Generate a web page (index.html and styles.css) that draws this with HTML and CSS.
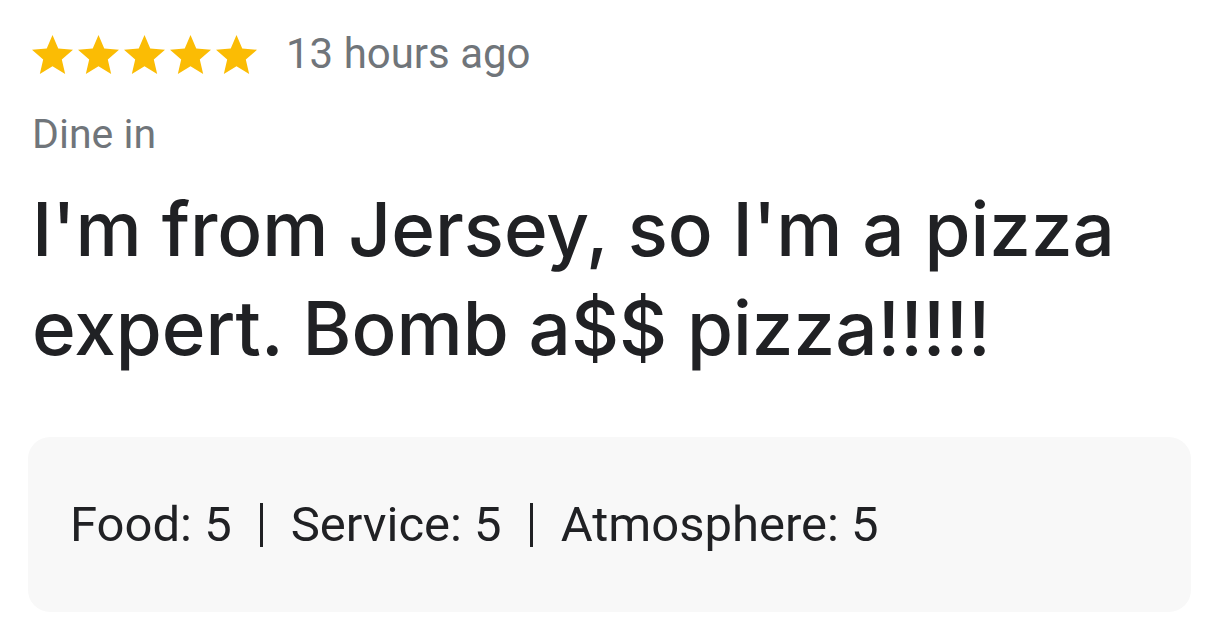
FILE: index.html
```html
<!DOCTYPE html>
<html>
<head>
<meta charset="utf-8">
<link rel="stylesheet" href="styles.css">
</head>
<body>
<div class="review">
  <div class="meta">
    <div class="stars">
      <svg class="star" viewBox="2 2 20 19"><path d="M12 17.27L18.18 21l-1.64-7.03L22 9.24l-7.19-.61L12 2 9.19 8.63 2 9.24l5.46 4.73L5.82 21z"/></svg>
      <svg class="star" viewBox="2 2 20 19"><path d="M12 17.27L18.18 21l-1.64-7.03L22 9.24l-7.19-.61L12 2 9.19 8.63 2 9.24l5.46 4.73L5.82 21z"/></svg>
      <svg class="star" viewBox="2 2 20 19"><path d="M12 17.27L18.18 21l-1.64-7.03L22 9.24l-7.19-.61L12 2 9.19 8.63 2 9.24l5.46 4.73L5.82 21z"/></svg>
      <svg class="star" viewBox="2 2 20 19"><path d="M12 17.27L18.18 21l-1.64-7.03L22 9.24l-7.19-.61L12 2 9.19 8.63 2 9.24l5.46 4.73L5.82 21z"/></svg>
      <svg class="star" viewBox="2 2 20 19"><path d="M12 17.27L18.18 21l-1.64-7.03L22 9.24l-7.19-.61L12 2 9.19 8.63 2 9.24l5.46 4.73L5.82 21z"/></svg>
    </div>
    <span class="time">13 hours ago</span>
  </div>
  <div class="mode">Dine in</div>
  <p class="text">I'm from Jersey, so I'm a pizza expert. Bomb a$$ pizza!!!!!</p>
  <div class="ratings">
    <span>Food: 5</span><span class="sep"></span><span>Service: 5</span><span class="sep"></span><span>Atmosphere: 5</span>
  </div>
</div>
</body>
</html>
```
FILE: styles.css
```css
html, body {
  margin: 0;
  padding: 0;
  background: #ffffff;
}
.review {
  padding: 33px 27px 0 28px;
}
.meta {
  display: flex;
  align-items: center;
  height: 42px;
}
.stars {
  display: flex;
  gap: 5px;
  margin-left: 4px;
}
.star {
  width: 41px;
  height: 39px;
  fill: #fbbc04;
  display: block;
}
.time {
  margin-left: 29px;
  font-family: Roboto, "Liberation Sans", sans-serif;
  font-size: 42px;
  color: #70757a;
  line-height: 42px;
}
.mode {
  margin-top: 38px;
  margin-left: 4px;
  font-family: Roboto, "Liberation Sans", sans-serif;
  font-size: 41px;
  color: #70757a;
  line-height: 42px;
}
.text {
  margin: 25px 0 0 4px;
  font-family: Inter, sans-serif;
  font-size: 74.5px;
  font-weight: 500;
  line-height: 99px;
  color: #202124;
  max-width: 1120px;
}
.ratings {
  margin-top: 59px;
  background: #f8f8f8;
  border-radius: 22px;
  height: 175px;
  display: flex;
  align-items: center;
  padding-left: 42px;
  font-family: Roboto, "Liberation Sans", sans-serif;
  font-size: 49px;
  color: #202124;
}
.sep {
  width: 3px;
  height: 44px;
  background: #202124;
  margin: 0 28px;
}
```
